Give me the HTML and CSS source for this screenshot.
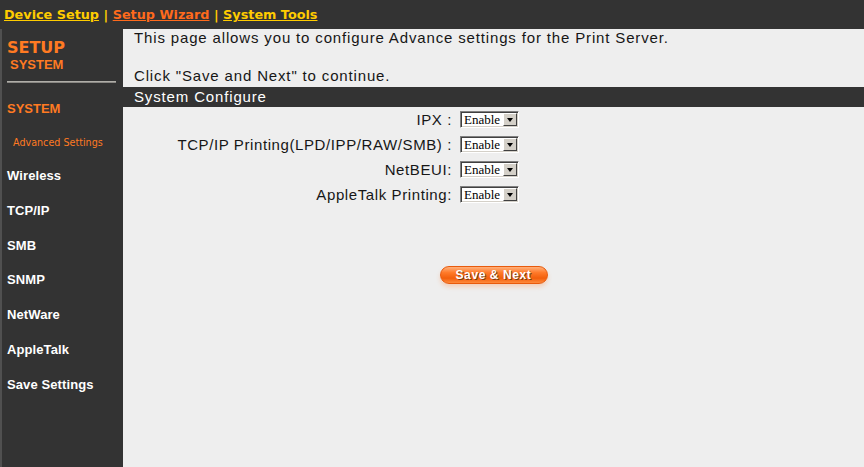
FILE: index.html
```html
<!DOCTYPE html>
<html lang="en">
<head>
  <meta charset="UTF-8">
  <title>System Configure</title>
  <link rel="stylesheet" href="styles.css">
</head>
<body>

  <div class="topbar">
    <a class="top-link" href="#">Device Setup</a>
    <span class="sep">|</span>
    <a class="top-link current" href="#">Setup Wizard</a>
    <span class="sep">|</span>
    <a class="top-link" href="#">System Tools</a>
  </div>

  <div class="sidebar">
    <div class="side-title">SETUP</div>
    <div class="side-subtitle">SYSTEM</div>
    <div class="side-rule"></div>
    <div class="side-section">SYSTEM</div>
    <div class="side-sub">Advanced Settings</div>
    <ul class="side-menu">
      <li>Wireless</li>
      <li>TCP/IP</li>
      <li>SMB</li>
      <li>SNMP</li>
      <li>NetWare</li>
      <li>AppleTalk</li>
      <li>Save Settings</li>
    </ul>
  </div>

  <div class="main">
    <p class="intro">This page allows you to configure Advance settings for the Print Server.</p>
    <p class="intro second">Click "Save and Next" to continue.</p>

    <div class="section-bar">System Configure</div>

    <div class="config-form">
      <div class="label">IPX :</div>
      <div class="select"><span class="value">Enable</span><span class="arrow"></span></div>

      <div class="label">TCP/IP Printing(LPD/IPP/RAW/SMB) :</div>
      <div class="select"><span class="value">Enable</span><span class="arrow"></span></div>

      <div class="label">NetBEUI:</div>
      <div class="select"><span class="value">Enable</span><span class="arrow"></span></div>

      <div class="label">AppleTalk Printing:</div>
      <div class="select"><span class="value">Enable</span><span class="arrow"></span></div>
    </div>

    <div class="actions">
      <button class="save-btn">Save &amp; Next</button>
    </div>
  </div>

</body>
</html>
```

FILE: styles.css
```css
body {
  margin: 0;
  padding: 0;
  height: 100vh;
  display: grid;
  grid-template-columns: 123px 1fr;
  grid-template-rows: 29px 1fr;
  background: #333333;
  font-family: "Liberation Sans", Arial, sans-serif;
  overflow: hidden;
}

.topbar {
  grid-column: 1 / 3;
  background: #333333;
  padding-left: 4px;
  line-height: 29px;
  font-family: "DejaVu Sans", Verdana, sans-serif;
  font-weight: bold;
  font-size: 12.8px;
  color: #ffcc00;
  white-space: nowrap;
}

.top-link {
  color: #ffcc00;
  text-decoration: underline;
}

.top-link.current {
  color: #ff6a1c;
}

.sidebar {
  background: #333333;
  border-left: 2px solid #505050;
  padding: 10px 0 0 5px;
  color: #ff7a22;
}

.side-title {
  font-family: "DejaVu Sans", Verdana, sans-serif;
  font-weight: bold;
  font-size: 16px;
  line-height: 18px;
}

.side-subtitle {
  font-weight: bold;
  font-size: 13px;
  line-height: 16px;
  padding-left: 3px;
}

.side-rule {
  margin-top: 8px;
  width: 109px;
  height: 1px;
  background: #b0aea8;
  border-bottom: 1px solid #8a8884;
}

.side-section {
  margin-top: 18px;
  font-weight: bold;
  font-size: 13px;
  line-height: 16px;
}

.side-sub {
  margin-top: 20px;
  padding-left: 6px;
  font-family: "DejaVu Sans", Verdana, sans-serif;
  font-size: 9.6px;
  line-height: 12px;
}

.side-menu {
  list-style: none;
  margin: 10px 0 0;
  padding: 0;
}

.side-menu li {
  height: 34.8px;
  line-height: 34.8px;
  color: #ffffff;
  font-weight: bold;
  font-size: 13px;
  letter-spacing: 0.1px;
}

.main {
  background: #eeeeee;
  color: #161616;
  font-size: 15px;
  letter-spacing: 0.85px;
}

.intro {
  margin: 0;
  padding-left: 11px;
  line-height: 18px;
}

.intro.second {
  margin-top: 20px;
}

.section-bar {
  margin-top: 2px;
  height: 20px;
  line-height: 20px;
  padding-left: 11px;
  background: #333333;
  color: #ffffff;
}

.config-form {
  margin-top: 4px;
  display: grid;
  grid-template-columns: 329px 59px;
  column-gap: 8px;
  row-gap: 8px;
  align-items: center;
}

.label {
  text-align: right;
  line-height: 17px;
  letter-spacing: 0.6px;
}

.select {
  height: 17px;
  box-sizing: border-box;
  display: flex;
  background: #ffffff;
  border: 1px solid;
  border-color: #808080 #ffffff #ffffff #808080;
  box-shadow: inset 1px 1px 0 #404040, inset -1px -1px 0 #d4d0c8;
  padding: 1px;
}

.value {
  flex: 1;
  font-family: "Liberation Serif", "Times New Roman", serif;
  font-size: 13px;
  line-height: 13px;
  letter-spacing: 0;
  color: #000000;
  padding-left: 2px;
}

.arrow {
  width: 14px;
  box-sizing: border-box;
  background: #d4d0c8;
  border: 1px solid;
  border-color: #ffffff #404040 #404040 #ffffff;
  display: flex;
  align-items: center;
  justify-content: center;
}

.arrow::after {
  content: "";
  border-left: 3.5px solid transparent;
  border-right: 3.5px solid transparent;
  border-top: 4px solid #000000;
}

.actions {
  margin-top: 63px;
  display: flex;
  justify-content: center;
}

.save-btn {
  width: 108px;
  height: 18px;
  border: 1px solid #e85a0c;
  border-radius: 9px;
  background: linear-gradient(to bottom, #ffb07a 0%, #ff7a2a 35%, #f25f0c 70%, #ff8a3c 100%);
  box-shadow: 0 3px 4px rgba(255, 140, 70, 0.3);
  color: #ffffff;
  font-family: "Liberation Sans", Arial, sans-serif;
  font-weight: bold;
  font-size: 12px;
  letter-spacing: 0.6px;
  line-height: 14px;
  padding: 0;
  text-shadow: 1px 1px 0 #7a3a10;
  cursor: pointer;
}
```
